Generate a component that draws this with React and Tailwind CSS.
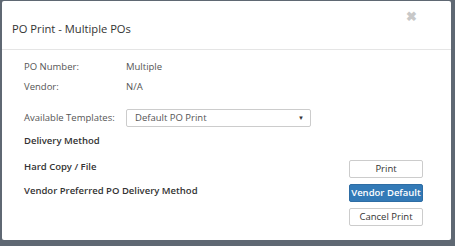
const Row = ({ label, value }) => (
  <div className="flex items-center h-[20px]">
    <span className="w-[102px] text-[#555]">{label}</span>
    <span className="text-[#555]">{value}</span>
  </div>
);

const Btn = ({ children, primary }) => (
  <button
    className={
      'w-[74px] h-[18px] rounded-[2px] border text-[9.5px] leading-none flex items-center justify-center ' +
      (primary ? 'bg-[#337ab7] border-[#2e6da4] text-white font-semibold' : 'bg-white border-[#ccc] text-[#333]')
    }
  >
    {children}
  </button>
);

export default function App() {
  return (
    <div className="w-[455px] h-[246px] bg-[#5f6873] overflow-hidden" style={{ fontFamily: '"Open Sans", sans-serif' }}>
      <div className="ml-[2px] mt-[1px] w-[449px] h-[239px] bg-white rounded-[2px] flex flex-col">
        <div className="h-[49px] border-b border-[#e5e5e5] flex items-start justify-between pl-[10px] pr-[34px]">
          <h3 className="mt-[21px] text-[11.2px] leading-[14px] text-[#333]">PO Print - Multiple POs</h3>
          <span className="mt-[9px] text-[#c8c8c8] text-[13px] font-bold leading-none">✖</span>
        </div>
        <div className="pl-[22px] pr-[28px] pt-[7px] text-[9.5px]">
          <Row label="PO Number:" value="Multiple" />
          <Row label="Vendor:" value="N/A" />
          <div className="flex items-center mt-[11px] h-[20px]">
            <span className="w-[102px] text-[#555]">Available Templates:</span>
            <div className="w-[185px] h-[18px] border border-[#ccc] rounded-[2px] flex items-center justify-between pl-[8px] pr-[6px] text-[#555]">
              <span>Default PO Print</span>
              <span className="text-[6px] text-[#333]">▼</span>
            </div>
          </div>
          <div className="mt-[6px] h-[14px] leading-[14px] font-semibold text-[#333]">Delivery Method</div>
          <div className="flex justify-between mt-[4px]">
            <div className="flex flex-col font-semibold text-[#333]">
              <span className="h-[24px] pt-[8px] leading-[14px]">Hard Copy / File</span>
              <span className="h-[24px] pt-[8px] leading-[14px]">Vendor Preferred PO Delivery Method</span>
            </div>
            <div className="flex flex-col gap-[6px] pt-[8px]">
              <Btn>Print</Btn>
              <Btn primary>Vendor Default</Btn>
              <Btn>Cancel Print</Btn>
            </div>
          </div>
        </div>
      </div>
    </div>
  );
}
